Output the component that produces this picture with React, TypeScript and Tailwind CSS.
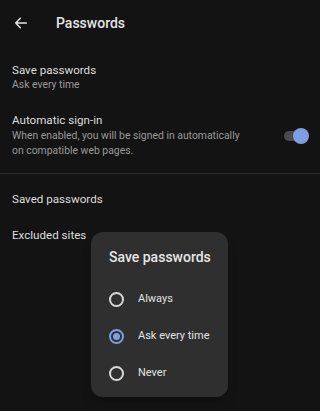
import React from "react";

function Radio({ checked }: { checked?: boolean }) {
  return (
    <span
      className={
        "flex h-[15px] w-[15px] items-center justify-center rounded-full border-2 " +
        (checked ? "border-[#7c9ee4]" : "border-[#d8d8d8]")
      }
    >
      {checked && <span className="h-[7px] w-[7px] rounded-full bg-[#7c9ee4]" />}
    </span>
  );
}

export default function App() {
  const [choice, setChoice] = React.useState("Ask every time");
  const options = ["Always", "Ask every time", "Never"];

  return (
    <div
      className="relative h-[411px] w-[320px] overflow-hidden bg-[#131313] text-[#dedede]"
      style={{ fontFamily: "Roboto, 'Noto Sans', sans-serif" }}
    >
      <div className="flex h-[45px] items-center pl-[13px] pt-px">
        <svg width="16" height="16" viewBox="0 0 24 24" fill="none" stroke="#e6e6e6" strokeWidth="2.2" strokeLinecap="round" strokeLinejoin="round">
          <path d="M20 12H4M11 5l-7 7 7 7" />
        </svg>
        <span className="ml-[27px] text-[14px] font-medium text-[#e4e4e4]">Passwords</span>
      </div>

      <div className="px-3 pt-[18px]">
        <div className="text-[11.6px] leading-[15px]">Save passwords</div>
        <div className="text-[10.4px] leading-[14px] text-[#9a9a9a]">Ask every time</div>
      </div>

      <div className="flex items-center px-3 pt-[21px] pb-[15px]">
        <div className="flex-1">
          <div className="text-[11.6px] leading-[15px]">Automatic sign-in</div>
          <div className="text-[10.4px] leading-[15px] text-[#9a9a9a]">
            When enabled, you will be signed in automatically
            <br />
            on compatible web pages.
          </div>
        </div>
        <div className="relative mr-[2px] h-[10px] w-[22px] rounded-full bg-[#4a4a4a]">
          <span className="absolute -right-[3px] -top-[3px] h-[16px] w-[16px] rounded-full bg-[#7c9ee4]" />
        </div>
      </div>

      <div className="h-px bg-[#2a2a2a]" />

      <div className="px-3 pt-[18px] text-[11.6px] leading-[15px]">Saved passwords</div>
      <div className="px-3 pt-[21px] text-[11.6px] leading-[15px]">Excluded sites</div>

      <div className="absolute left-[91px] top-[232px] h-[165px] w-[137px] rounded-[12px] bg-[#2f2f2f] shadow-lg">
        <div className="pl-[18px] pt-[16px] text-[14px] font-medium leading-[18px] text-[#e6e6e6]">Save passwords</div>
        <div className="mt-[15px] flex flex-col">
          {options.map((o) => (
            <button
              key={o}
              onClick={() => setChoice(o)}
              className="flex h-[37px] items-center gap-[14px] pl-[18px] text-left text-[11px] text-[#e2e2e2]"
            >
              <Radio checked={choice === o} />
              <span>{o}</span>
            </button>
          ))}
        </div>
      </div>
    </div>
  );
}
